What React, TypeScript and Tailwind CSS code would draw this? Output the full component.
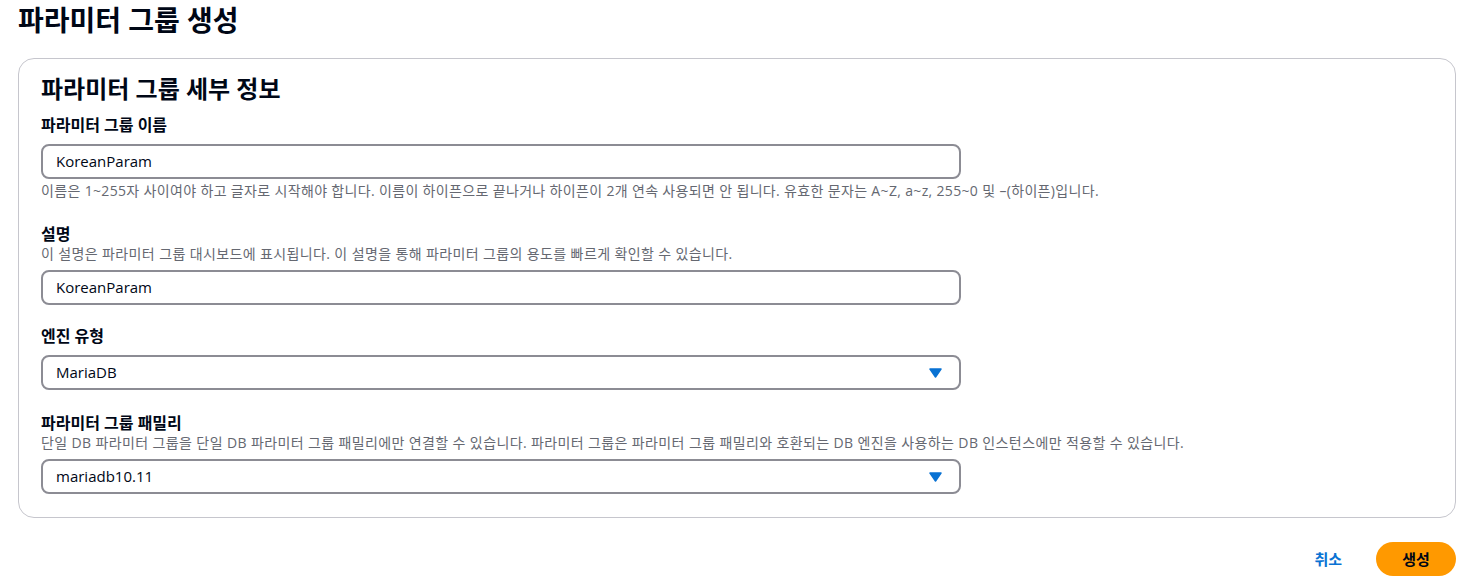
import React from 'react';

const font = { fontFamily: '"Open Sans", "Noto Sans CJK KR", sans-serif' };

const Caret: React.FC = () => (
  <svg width="13" height="10" viewBox="0 0 13 10" className="text-[#0972d3]">
    <path d="M1 1h11L6.5 9z" fill="currentColor" stroke="currentColor" strokeWidth="1.5" strokeLinejoin="round" />
  </svg>
);

interface FieldProps {
  label: string;
  description?: string;
  hint?: string;
  value: string;
  select?: boolean;
  className?: string;
}

const Field: React.FC<FieldProps> = ({ label, description, hint, value, select, className }) => (
  <div className={className}>
    <div className="text-[16px] leading-[22px] font-bold text-[#000716]">{label}</div>
    {description && (
      <div className="text-[14px] leading-[18px] tracking-[0.38px] text-[#656871]">{description}</div>
    )}
    <div
      className={`w-[920px] h-[35px] border-2 border-[#8c8c94] rounded-[8px] flex items-center pl-[13px] pr-[17px] bg-white ${
        description ? 'mt-[7px]' : 'mt-[8px]'
      }`}
    >
      <span className="flex-1 text-[15px] text-[#000716]">{value}</span>
      {select && <Caret />}
    </div>
    {hint && (
      <div className="mt-[3px] text-[14px] leading-[18px] tracking-[0.34px] text-[#656871]">{hint}</div>
    )}
  </div>
);

export default function App() {
  return (
    <div style={font} className="w-[1478px] h-[579px] bg-white pl-[18px] pr-[22px] pt-[2px] text-[#000716] overflow-hidden">
      <h1 className="text-[28px] leading-[36px] font-bold">파라미터 그룹 생성</h1>

      <div className="mt-[20px] border border-[#c6c6cd] rounded-[16px] pl-[22px] pt-[15px] pb-[23px]">
        <h2 className="text-[24px] leading-[30px] font-bold">파라미터 그룹 세부 정보</h2>

        <Field
          className="mt-[10px]"
          label="파라미터 그룹 이름"
          value="KoreanParam"
          hint="이름은 1~255자 사이여야 하고 글자로 시작해야 합니다. 이름이 하이픈으로 끝나거나 하이픈이 2개 연속 사용되면 안 됩니다. 유효한 문자는 A~Z, a~z, 255~0 및 –(하이픈)입니다."
        />
        <Field
          className="mt-[23px]"
          label="설명"
          description="이 설명은 파라미터 그룹 대시보드에 표시됩니다. 이 설명을 통해 파라미터 그룹의 용도를 빠르게 확인할 수 있습니다."
          value="KoreanParam"
        />
        <Field className="mt-[20px]" label="엔진 유형" value="MariaDB" select />
        <Field
          className="mt-[22px]"
          label="파라미터 그룹 패밀리"
          description="단일 DB 파라미터 그룹을 단일 DB 파라미터 그룹 패밀리에만 연결할 수 있습니다. 파라미터 그룹은 파라미터 그룹 패밀리와 호환되는 DB 엔진을 사용하는 DB 인스턴스에만 적용할 수 있습니다."
          value="mariadb10.11"
          select
        />
      </div>

      <div className="mt-[24px] flex justify-end items-center gap-[14px]">
        <button className="px-[20px] h-[34px] text-[15px] font-bold text-[#0972d3]">취소</button>
        <button className="w-[80px] h-[34px] rounded-full bg-[#ff9900] text-[15px] font-bold text-[#000716]">
          생성
        </button>
      </div>
    </div>
  );
}
